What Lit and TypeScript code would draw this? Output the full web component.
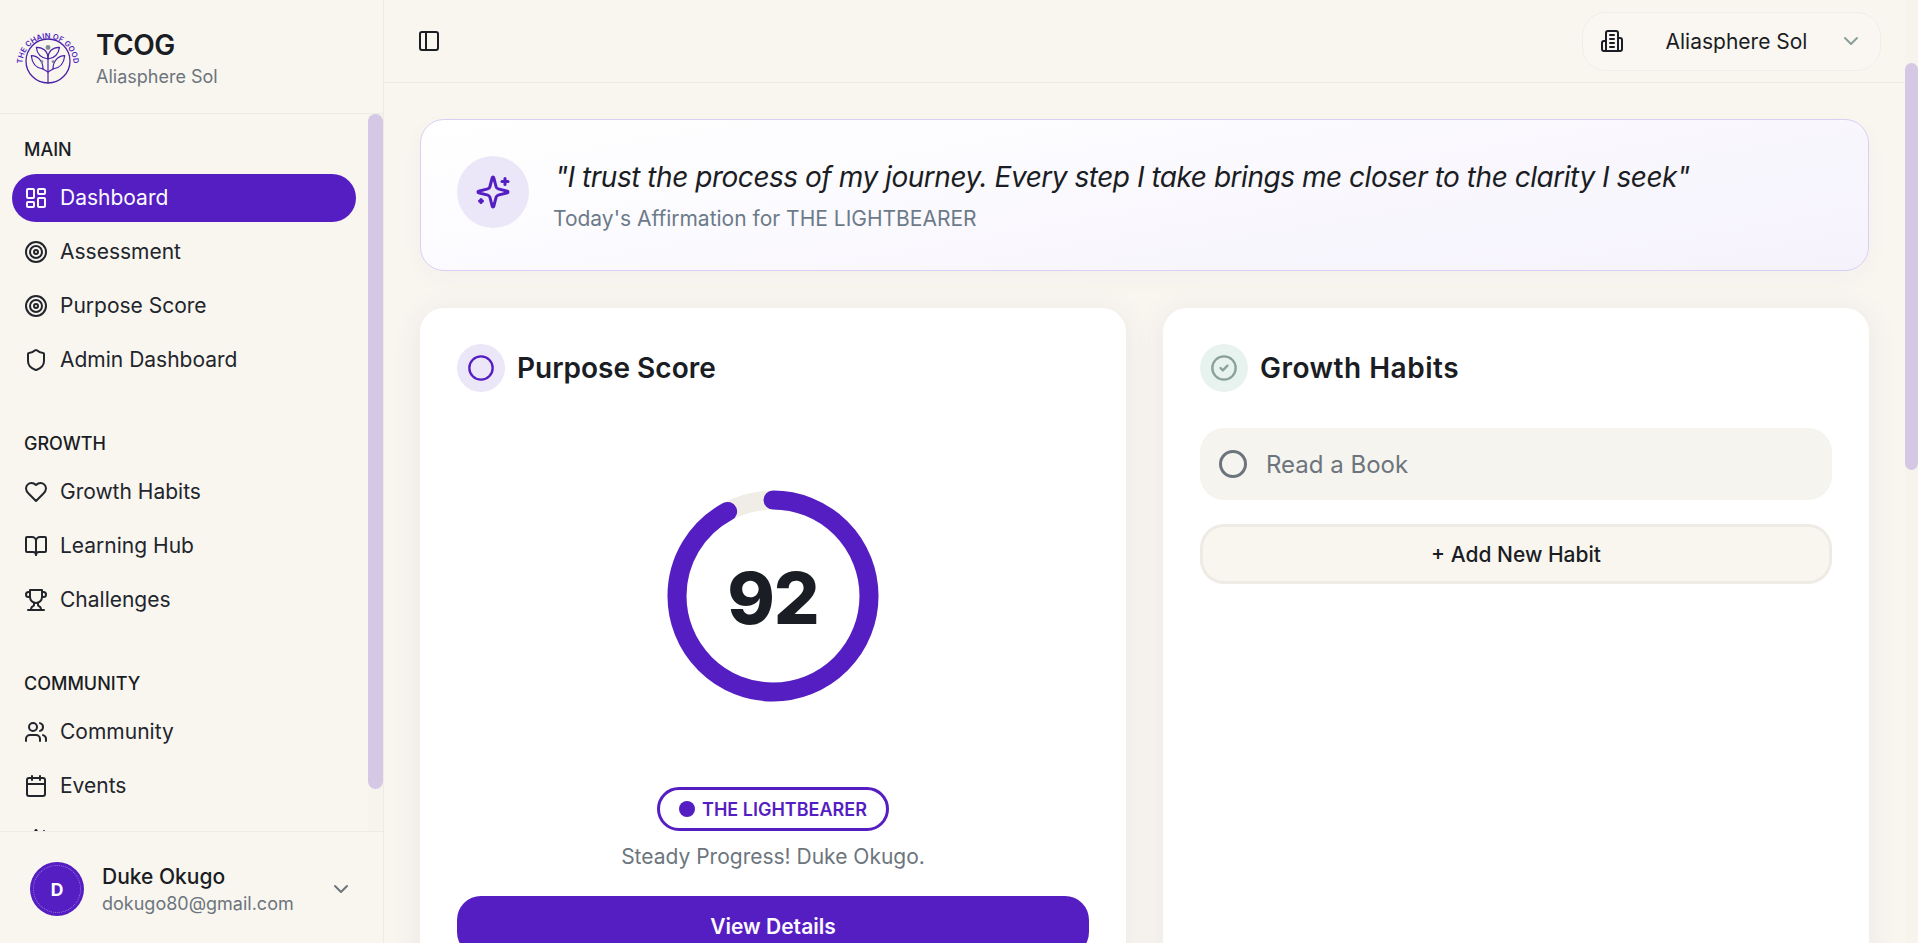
import { LitElement, html, css, svg } from "lit";
import { customElement } from "lit/decorators.js";

const I = (c: unknown, cls = "ic") => html`<svg class=${cls} viewBox="0 0 24 24" fill="none" stroke="currentColor" stroke-width="2" stroke-linecap="round" stroke-linejoin="round">${c}</svg>`;
const target = svg`<circle cx="12" cy="12" r="10"/><circle cx="12" cy="12" r="6"/><circle cx="12" cy="12" r="2"/>`;
const icons: Record<string, unknown> = {
  dash: svg`<rect width="7" height="9" x="3" y="3" rx="1"/><rect width="7" height="5" x="14" y="3" rx="1"/><rect width="7" height="9" x="14" y="12" rx="1"/><rect width="7" height="5" x="3" y="16" rx="1"/>`,
  target,
  shield: svg`<path d="M20 13c0 5-3.5 7.5-7.66 8.95a1 1 0 0 1-.67-.01C7.5 20.5 4 18 4 13V6a1 1 0 0 1 1-1c2 0 4.5-1.2 6.24-2.72a1.17 1.17 0 0 1 1.52 0C14.51 3.81 17 5 19 5a1 1 0 0 1 1 1z"/>`,
  heart: svg`<path d="M19 14c1.49-1.46 3-3.21 3-5.5A5.5 5.5 0 0 0 16.5 3c-1.76 0-3 .5-4.5 2-1.5-1.5-2.74-2-4.5-2A5.5 5.5 0 0 0 2 8.5c0 2.3 1.5 4.05 3 5.5l7 7Z"/>`,
  book: svg`<path d="M12 7v14"/><path d="M3 18a1 1 0 0 1-1-1V4a1 1 0 0 1 1-1h5a4 4 0 0 1 4 4 4 4 0 0 1 4-4h5a1 1 0 0 1 1 1v13a1 1 0 0 1-1 1h-6a3 3 0 0 0-3 3 3 3 0 0 0-3-3z"/>`,
  trophy: svg`<path d="M6 9H4.5a2.5 2.5 0 0 1 0-5H6"/><path d="M18 9h1.5a2.5 2.5 0 0 0 0-5H18"/><path d="M4 22h16"/><path d="M10 14.66V17c0 .55-.47.98-.97 1.21C7.85 18.75 7 20.24 7 22"/><path d="M14 14.66V17c0 .55.47.98.97 1.21C16.15 18.75 17 20.24 17 22"/><path d="M18 2H6v7a6 6 0 0 0 12 0V2Z"/>`,
  users: svg`<path d="M16 21v-2a4 4 0 0 0-4-4H6a4 4 0 0 0-4 4v2"/><circle cx="9" cy="7" r="4"/><path d="M22 21v-2a4 4 0 0 0-3-3.87"/><path d="M16 3.13a4 4 0 0 1 0 7.75"/>`,
  cal: svg`<path d="M8 2v4"/><path d="M16 2v4"/><rect width="18" height="18" x="3" y="4" rx="2"/><path d="M3 10h18"/>`,
  panel: svg`<rect width="18" height="18" x="3" y="3" rx="2"/><path d="M9 3v18"/>`,
  chev: svg`<path d="m6 9 6 6 6-6"/>`,
  building: svg`<path d="M6 22V4a2 2 0 0 1 2-2h8a2 2 0 0 1 2 2v18Z"/><path d="M6 12H4a2 2 0 0 0-2 2v6a2 2 0 0 0 2 2h2"/><path d="M18 9h2a2 2 0 0 1 2 2v9a2 2 0 0 1-2 2h-2"/><path d="M10 6h4"/><path d="M10 10h4"/><path d="M10 14h4"/><path d="M10 18h4"/>`,
  spark: svg`<path d="M9.937 15.5A2 2 0 0 0 8.5 14.063l-6.135-1.582a.5.5 0 0 1 0-.962L8.5 9.936A2 2 0 0 0 9.937 8.5l1.582-6.135a.5.5 0 0 1 .963 0L14.063 8.5A2 2 0 0 0 15.5 9.937l6.135 1.581a.5.5 0 0 1 0 .964L15.5 14.063a2 2 0 0 0-1.437 1.437l-1.582 6.135a.5.5 0 0 1-.963 0z"/><path d="M20 3v4"/><path d="M22 5h-4"/><path d="M4 17v2"/><path d="M5 18H3"/>`,
};

const groups = [
  { label: "MAIN", items: [["Dashboard", "dash", true], ["Assessment", "target"], ["Purpose Score", "target"], ["Admin Dashboard", "shield"]] },
  { label: "GROWTH", items: [["Growth Habits", "heart"], ["Learning Hub", "book"], ["Challenges", "trophy"]] },
  { label: "COMMUNITY", items: [["Community", "users"], ["Events", "cal"], ["", "spark"]] },
] as { label: string; items: [string, string, boolean?][] }[];

@customElement("app-root")
export class AppRoot extends LitElement {
  static styles = css`
    :host { display: block; width: 100%; height: 943px; overflow: hidden; background: #f9f6f0; font-family: Inter, "Liberation Sans", sans-serif; color: #1a1d23; }
    .app { display: flex; height: 943px; }
    .side { width: 384px; flex: none; border-right: 1px solid #eeebe4; display: flex; flex-direction: column; height: 943px; box-sizing: border-box; }
    .brand { height: 114px; flex: none; border-bottom: 1px solid #eeebe4; display: flex; align-items: center; gap: 15px; padding-left: 15px; box-sizing: border-box; }
    .logo { width: 66px; height: 66px; flex: none; margin-top: 8px; overflow: visible; }
    .logo text { font: 600 7.6px Inter, sans-serif; fill: #4f1fc0; }
    .btxt { padding-top: 3px; }
    .bname { font-size: 28px; font-weight: 600; line-height: 36px; letter-spacing: -.5px; }
    .bsub { font-size: 18px; color: #6c757d; line-height: 24px; margin-top: 1.5px; }
    .navwrap { flex: 1; min-height: 0; display: flex; overflow: hidden; }
    .nav { flex: 1; min-width: 0; padding: 0 12px; overflow: hidden; height: 100%; }
    .sb { width: 15px; flex: none; background: #f7f4ee; }
    .thumb { background: #d4c8e4; border-radius: 8px; }
    .side .thumb { height: 675px; }
    .grp { margin-bottom: 24px; }
    .lbl { font-size: 18px; font-weight: 450; line-height: 24px; padding: 24px 12px 0; height: 60px; box-sizing: border-box; }
    .item { height: 48px; margin-bottom: 6px; display: flex; align-items: center; gap: 12px; padding: 0 12px; border-radius: 24px; font-size: 21px; color: #22252c; box-sizing: border-box; }
    .item span { padding-bottom: 2px; }
    .item.on { background: #551ec3; color: #fcfaff; }
    .ic { width: 24px; height: 24px; flex: none; }
    .foot { flex: none; height: 112px; border-top: 1px solid #eeebe4; box-sizing: border-box; display: flex; align-items: center; padding: 3px 30px 0; gap: 18px; }
    .av { width: 54px; height: 54px; border-radius: 50%; background: #551ec3; display: flex; align-items: center; justify-content: center; color: #fff; font-weight: 700; font-size: 17.5px; flex: none; position: relative; }
    .av::after { content: ""; position: absolute; inset: 3px; border-radius: 50%; border: 1px dotted #ffffff66; }
    .uinfo { flex: 1; min-width: 0; padding-top: 2px; }
    .uname { font-size: 21px; font-weight: 450; line-height: 26px; }
    .umail { font-size: 18px; color: #6c757d; line-height: 24px; margin-top: 2px; }
    .uch { color: #6c757d; }

    .main { flex: 1; min-width: 0; display: flex; }
    .col { flex: 1; min-width: 0; display: flex; flex-direction: column; }
    .top { height: 83px; flex: none; border-bottom: 1px solid #eeebe4; box-sizing: border-box; display: flex; align-items: center; justify-content: space-between; padding: 0 24px 0 33px; }
    .sel { width: 299px; height: 59px; border: 1px solid #f1eee8; border-radius: 24px; background: #faf7f2; display: flex; align-items: center; box-sizing: border-box; padding: 0 17px 0 17px; font-size: 21px; }
    .sel span { flex: 1; text-align: center; padding-left: 10px; }
    .sel .c { color: #8aa09b; }
    .page { flex: 1; min-height: 0; padding: 36px 36px 0; overflow: hidden; }
    .msb { width: 13px; flex: none; background: #f7f4ee; padding-top: 63px; box-sizing: border-box; }
    .msb .thumb { height: 407px; }
    .hero { height: 152px; box-sizing: border-box; border: 1px solid #d9cff5; border-radius: 24px; background: linear-gradient(170deg, #ffffff 0%, #f5f2fc 100%); box-shadow: 0 8px 24px rgba(60,40,100,.03); display: flex; align-items: flex-start; gap: 24px; padding: 36px; }
    .hico { width: 72px; height: 72px; border-radius: 50%; background: #ebe6f8; display: flex; align-items: center; justify-content: center; color: #551ec3; flex: none; }
    .hico svg { width: 36px; height: 36px; }
    .htxt { padding-top: 1px; }
    .q { font-size: 28px; font-style: italic; line-height: 40px; letter-spacing: -.47px; color: #1a1d23; padding-left: 2px; }
    .qs { font-size: 21px; color: #6c7a89; line-height: 28px; margin-top: 8px; }
    .cards { display: grid; grid-template-columns: 1fr 1fr; gap: 37px; margin-top: 37px; }
    .card { background: #fff; border-radius: 24px; box-shadow: 0 4px 32px rgba(70,40,110,.08); padding: 36px 37px; height: 780px; box-sizing: border-box; }
    .ct { display: flex; align-items: center; gap: 12px; height: 48px; }
    .ci { width: 48px; height: 48px; border-radius: 50%; display: flex; align-items: center; justify-content: center; flex: none; }
    .ci.p { background: #ebe6f8; color: #551ec3; }
    .ci.g { background: #e8f3ef; color: #8aa09b; }
    .ci svg { width: 28px; height: 28px; }
    h2 { margin: 0; font-size: 28px; font-weight: 600; }
    h2.wide { letter-spacing: .5px; }
    .ringw { display: flex; justify-content: center; margin-top: 98px; }
    .ring { width: 212px; height: 212px; position: relative; display: flex; align-items: center; justify-content: center; }
    .ring svg { position: absolute; inset: 0; }
    .num { font-size: 72px; font-weight: 800; line-height: 1; position: relative; padding-top: 4px; letter-spacing: -1px; }
    .bw { display: flex; justify-content: center; margin-top: 85px; }
    .badge { height: 44px; box-sizing: border-box; border: 3px solid #551ec3; border-radius: 22px; display: flex; align-items: center; gap: 7px; padding: 0 19px; color: #551ec3; font-size: 18px; font-weight: 600; }
    .dot { width: 16px; height: 16px; background: #551ec3; border-radius: 50%; }
    .sp { text-align: center; font-size: 21px; color: #6c757d; margin-top: 12px; line-height: 28px; }
    .btn { height: 60px; margin-top: 25px; background: #551ec3; color: #fcfaff; border-radius: 24px; display: flex; align-items: center; justify-content: center; font-size: 21px; font-weight: 600; }
    .habit { margin-top: 36px; height: 72px; border-radius: 24px; background: #f6f4ef; display: flex; align-items: center; gap: 19px; padding: 0 19px; font-size: 24px; color: #6c757d; }
    .hc { width: 28px; height: 28px; border: 3px solid #6c757d; border-radius: 50%; box-sizing: border-box; flex: none; }
    .add { margin-top: 24px; height: 60px; box-sizing: border-box; border: 3px solid #eeebe4; background: #f9f6f0; border-radius: 24px; display: flex; align-items: center; justify-content: center; font-size: 21px; font-weight: 450; }
  `;

  logo() {
    return html`<svg class="logo" viewBox="0 0 66 66">
      <defs><path id="arc" d="M7.5 36 A25.5 25.5 0 1 1 58.5 36"/></defs>
      <text><textPath href="#arc" startOffset="50%" text-anchor="middle">THE CHAIN OF GOOD</textPath></text>
      <circle cx="33" cy="33" r="22" fill="none" stroke="#4a22a8" stroke-width="1.3"/>
      <g fill="none" stroke="#4a22a8" stroke-width="1.2" stroke-linecap="round" stroke-linejoin="round">
        <path d="M33 55V31"/>
        <path d="M33 44L28 41"/><path d="M33 44L38 41"/>
        <path d="M33 31C26 30 22 26 21.3 19.3C28 19 33 23 33 31Z"/>
        <path d="M33 31C40 30 43.5 26 44.5 19.3C38 19 33 23 33 31Z"/>
        <path d="M28 41C21 40 17 35 16.3 27.7C23 28 28 33 28 41Z"/>
        <path d="M38 41C45 40 49 35 49.7 27.7C43 28 38 33 38 41Z"/>
      </g>
      <circle cx="33" cy="19.5" r="2.4" fill="#7d8f92"/><circle cx="27" cy="33.7" r="1.4" fill="#7d8f92"/><circle cx="38" cy="33.7" r="1.4" fill="#7d8f92"/>
    </svg>`;
  }

  render() {
    const r = 96, C = 2 * Math.PI * r;
    return html`<div class="app">
      <aside class="side">
        <div class="brand">${this.logo()}<div class="btxt"><div class="bname">TCOG</div><div class="bsub">Aliasphere Sol</div></div></div>
        <div class="navwrap">
          <nav class="nav">
            ${groups.map((g) => html`<div class="grp"><div class="lbl">${g.label}</div>
              ${g.items.map(([t, ic, on]) => html`<div class="item ${on ? "on" : ""}">${I(icons[ic])}<span>${t}</span></div>`)}</div>`)}
          </nav>
          <div class="sb"><div class="thumb"></div></div>
        </div>
        <div class="foot">
          <div class="av">D</div>
          <div class="uinfo"><div class="uname">Duke Okugo</div><div class="umail">dokugo80@gmail.com</div></div>
          ${I(icons.chev, "ic uch")}
        </div>
      </aside>
      <main class="main">
        <div class="col">
          <div class="top">
            ${I(icons.panel)}
            <div class="sel">${I(icons.building)}<span>Aliasphere Sol</span>${I(icons.chev, "ic c")}</div>
          </div>
          <div class="page">
            <section class="hero">
              <div class="hico">${I(icons.spark)}</div>
              <div class="htxt">
                <div class="q">"I trust the process of my journey. Every step I take brings me closer to the clarity I seek"</div>
                <div class="qs">Today's Affirmation for THE LIGHTBEARER</div>
              </div>
            </section>
            <div class="cards">
              <section class="card">
                <div class="ct"><div class="ci p">${I(svg`<circle cx="12" cy="12" r="10"/>`)}</div><h2>Purpose Score</h2></div>
                <div class="ringw"><div class="ring">
                  <svg viewBox="0 0 212 212" width="212" height="212" fill="none">
                    <circle cx="106" cy="106" r=${r} stroke="#f0ede6" stroke-width="19"/>
                    <circle cx="106" cy="106" r=${r} stroke="#551ec3" stroke-width="19" stroke-linecap="round" stroke-dasharray="${C * 0.92} ${C}" transform="rotate(-90 106 106)"/>
                  </svg>
                  <div class="num">92</div>
                </div></div>
                <div class="bw"><div class="badge"><span class="dot"></span>THE LIGHTBEARER</div></div>
                <div class="sp">Steady Progress! Duke Okugo.</div>
                <div class="btn">View Details</div>
              </section>
              <section class="card">
                <div class="ct"><div class="ci g">${I(svg`<circle cx="12" cy="12" r="10"/><path d="m9 12 2 2 4-4"/>`)}</div><h2 class="wide">Growth Habits</h2></div>
                <div class="habit"><span class="hc"></span>Read a Book</div>
                <div class="add">+ Add New Habit</div>
              </section>
            </div>
          </div>
        </div>
        <div class="msb"><div class="thumb"></div></div>
      </main>
    </div>`;
  }
}
